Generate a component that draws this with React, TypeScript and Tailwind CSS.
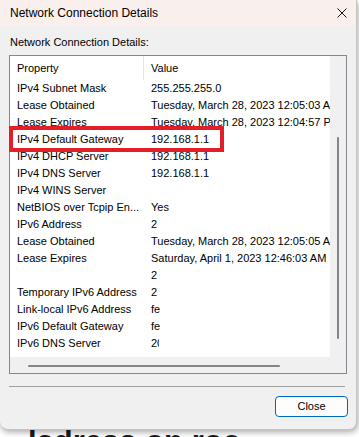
import React from "react";

const rows: [string, React.ReactNode][] = [
  ["IPv4 Subnet Mask", "255.255.255.0"],
  ["Lease Obtained", "Tuesday, March 28, 2023 12:05:03 AM"],
  ["Lease Expires", "Tuesday, March 28, 2023 12:04:57 PM"],
  ["IPv4 Default Gateway", "192.168.1.1"],
  ["IPv4 DHCP Server", "192.168.1.1"],
  ["IPv4 DNS Server", "192.168.1.1"],
  ["IPv4 WINS Server", ""],
  ["NetBIOS over Tcpip En...", "Yes"],
  ["IPv6 Address", "2"],
  ["Lease Obtained", "Tuesday, March 28, 2023 12:05:05 AM"],
  ["Lease Expires", "Saturday, April 1, 2023 12:46:03 AM"],
  ["", "2"],
  ["Temporary IPv6 Address", "2"],
  ["Link-local IPv6 Address", "fe"],
  ["IPv6 Default Gateway", "fe"],
  [
    "IPv6 DNS Server",
    <span className="inline-block w-[8px] overflow-hidden align-top">20</span>,
  ],
];

export default function App() {
  return (
    <div className="relative w-[359px] h-[437px] overflow-hidden bg-white font-['Liberation_Sans',Arial,sans-serif] text-black">
      {/* page behind the dialog */}
      <div className="pt-[426px] pl-[28px] text-[31px] leading-none font-bold text-[#1a1a1a] whitespace-nowrap">
        ladress on roc
      </div>

      {/* dialog window */}
      <div className="absolute left-0 top-0 w-[357px] h-[430px] bg-[#f0f0f0] rounded-b-[8px] border-r border-b border-[#c4c4c4] shadow-[1px_2px_6px_rgba(0,0,0,0.35)] flex flex-col">
        <div className="h-[26px] bg-[#f9efec] flex items-center justify-between pl-[10px] pr-[9px]">
          <span className="text-[12px]">Network Connection Details</span>
          <svg width="10" height="10" viewBox="0 0 10 10">
            <path d="M0.5 0.5 L9.5 9.5 M9.5 0.5 L0.5 9.5" stroke="#111" strokeWidth="1" />
          </svg>
        </div>

        <div className="pl-[10px] pt-[9px] text-[11px] leading-[14px] h-[23px]">
          Network Connection Details:
        </div>

        <div className="mt-[6px] ml-[9px] w-[338px] h-[319px] border border-[#828790] bg-white flex flex-col">
          <div className="flex flex-1 min-h-0">
            <div className="flex-1 overflow-hidden text-[11px]">
              <div className="flex h-[24px] items-center">
                <div className="w-[134px] h-full pl-[7px] flex items-center border-r border-[#e5e5e5]">
                  Property
                </div>
                <div className="pl-[7px]">Value</div>
              </div>
              {rows.map(([p, v], i) => (
                <div key={i} className="flex h-[17px] items-center whitespace-nowrap">
                  <div className="w-[134px] shrink-0 pl-[7px]">{p}</div>
                  <div className="pl-[7px]">{v}</div>
                </div>
              ))}
            </div>
            <div className="w-[16px] bg-[#f0f0f0] pt-[81px]">
              <div className="ml-[7px] w-[2px] h-[202px] bg-[#858585] rounded-full" />
            </div>
          </div>
          <div className="h-[16px] flex">
            <div className="flex-1 bg-[#f0f0f0] pt-[8px]">
              <div className="ml-[18px] w-[252px] h-[2px] bg-[#858585] rounded-full" />
            </div>
            <div className="w-[16px] bg-[#f0f0f0]" />
          </div>
        </div>

        <div className="mt-[12px] ml-[9px] w-[336px] h-px bg-[#a0a0a0]" />

        <div className="mt-[9px] flex justify-end pr-[8px]">
          <button className="w-[73px] h-[21px] rounded-[4px] border border-[#0067c0] bg-[#fdfdfd] text-[11px] flex items-center justify-center">
            Close
          </button>
        </div>
      </div>

      {/* red highlight */}
      <div className="absolute left-[9px] top-[126px] w-[215px] h-[26px] border-[4px] border-[#e31e26]" />
    </div>
  );
}
